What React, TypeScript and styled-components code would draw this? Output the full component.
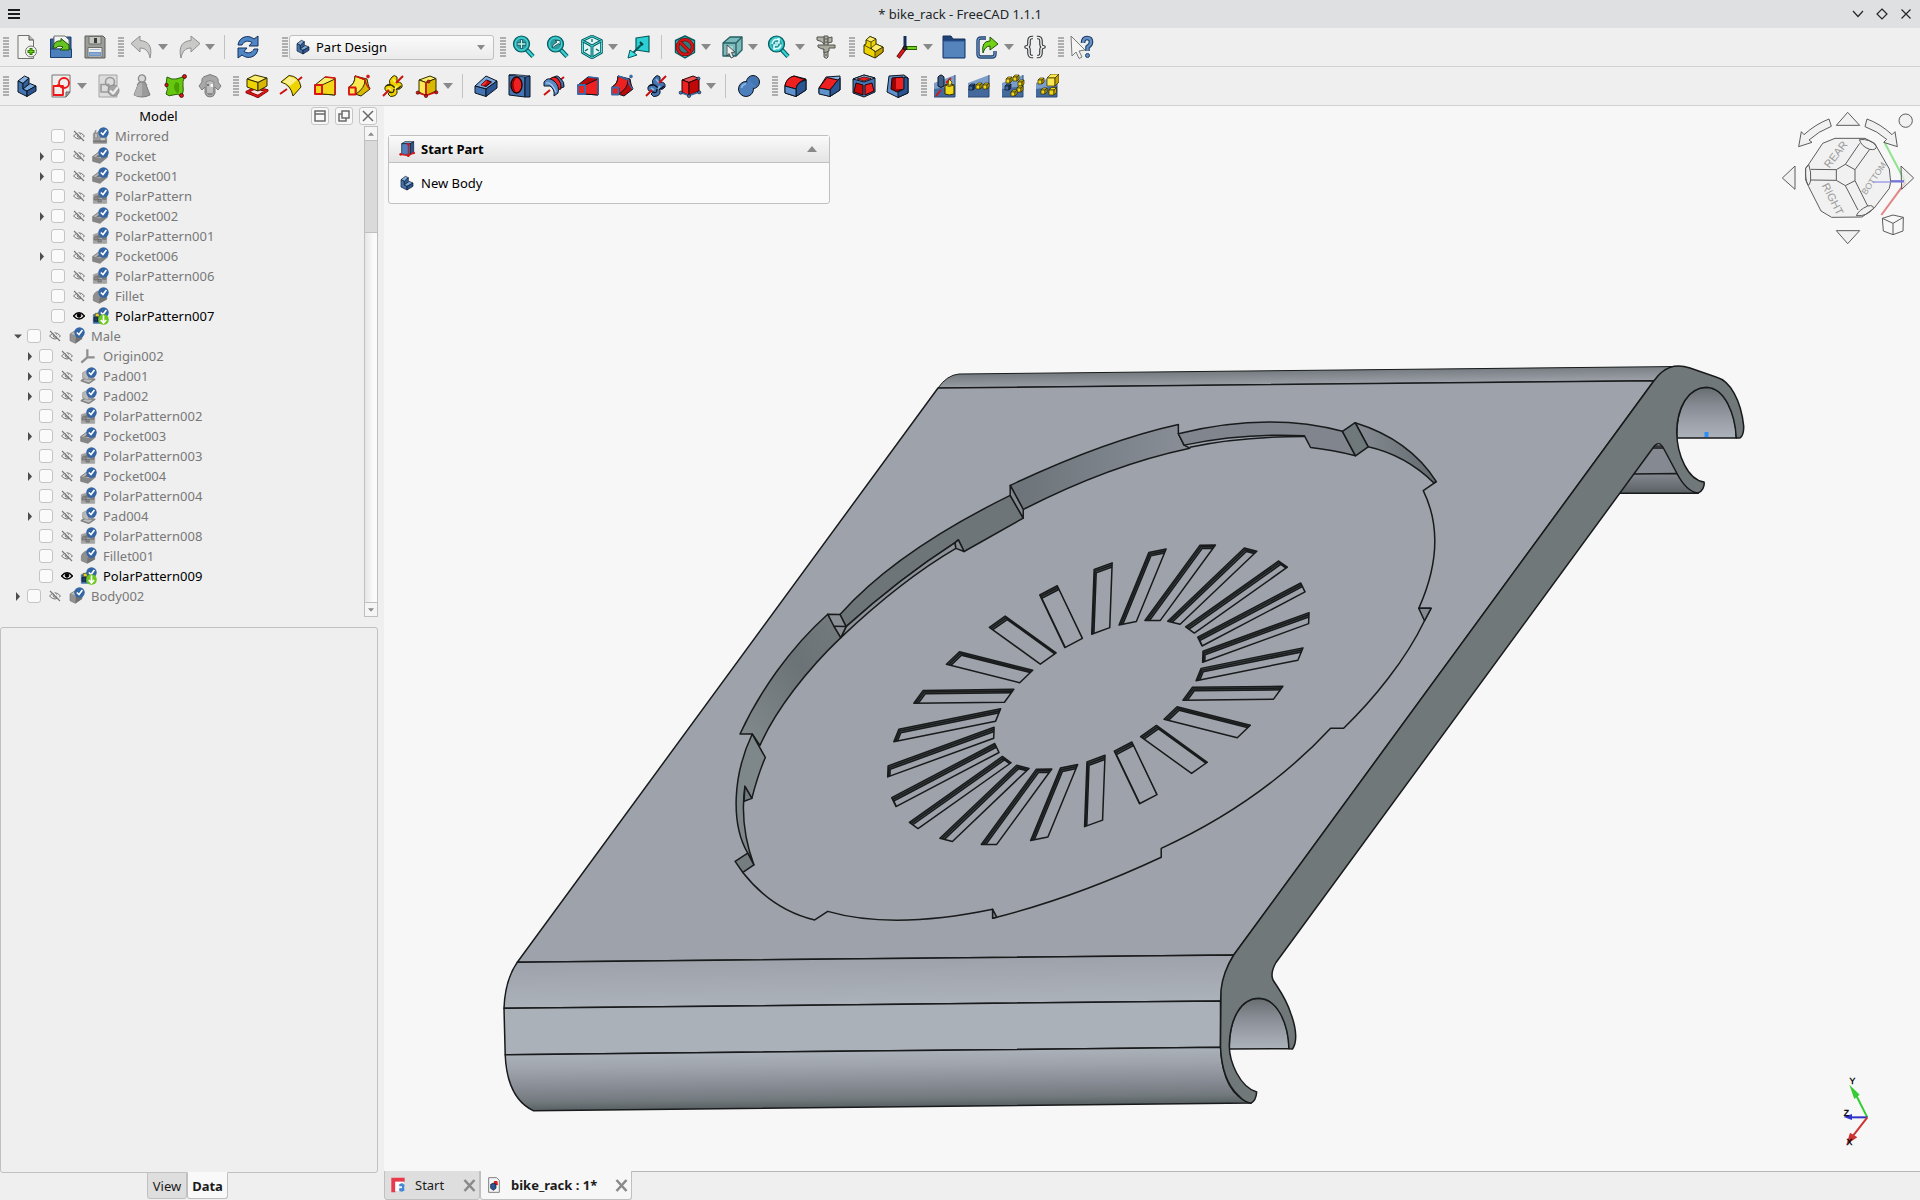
import React, { useState } from 'react';
import styled, { createGlobalStyle } from 'styled-components';

const Global = createGlobalStyle`
  * { box-sizing: border-box; }
  body { margin: 0; background: #efefef; color: #1b1b1b; font: 13px/20px "Noto Sans", "Open Sans", sans-serif; }
  button, input, select { font: inherit; color: inherit; }
  svg { display: block; }
`;

/* ---------- icon drawing ---------- */

type Shape = [d: string, fill?: string, stroke?: string, width?: number];

const NAVY = '#0b1521';
const OLIVE = '#302b00';
const TEAL = '#06595c';
const DARKRED = '#280000';
const circ = (x: number, y: number, r: number) =>
  `M${x - r} ${y}a${r} ${r} 0 1 0 ${2 * r} 0a${r} ${r} 0 1 0 ${-2 * r} 0Z`;

const cube = (top: string, left: string, right: string, line: string): Shape[] => [
  ['M4 6L15 2 21 4.500 11 8.500Z', top, line],
  ['M4 6L11 8.500V21.500L4 18Z', left, line],
  ['M11 8.500L21 4.500V17L11 21.500Z', right, line],
];
const smallCube = (x: number, y: number, a: string, b: string, line: string, s = 4): Shape[] => [
  [`M${x} ${y}l${s / 2}-${s / 2}h${s}l-${s / 2} ${s / 2}z`, a, line, 0.7],
  [`M${x} ${y}h${s}v${s}h-${s}z`, a, line, 0.7],
  [`M${x + s} ${y}l${s / 2}-${s / 2}v${s}l-${s / 2} ${s / 2}z`, b, line, 0.7],
];
const patternBase: Shape[] = [
  ['M1 9L22 1V23H1Z', '#7a9dc9', 'none'],
  ['M1 15L22 12V23H1Z', '#44699c', 'none'],
  ['M1 23H22M22 1V23', 'none', '#2a4a78', 1],
];
const magnifier: Shape[] = [
  ['M14 14L21 21.500', 'none', TEAL, 4.5],
  ['M14 14L21 21.500', 'none', '#34d4d6', 2.5],
  [circ(9.5, 9, 8), '#22b8bc', TEAL, 1.2],
  [circ(9.5, 9, 6), '#2c9a9e', '#5fe6e6', 0.8],
];
const hexOutline = 'M12 1L21.500 5.500V17.500L12 23L2.500 17.500V5.500Z';
const loft = (a: string, b: string, frame: string, line: string): Shape[] => [
  ['M2 11L12 3 22 4 22 21 9 20 2 19Z', b, line],
  ['M9 11L22 5V21L9 20Z', a, line],
  ['M2 11H9V20H2Z', a, frame, 2],
  ['M12 3L22 4V21', 'none', frame, 1.4],
];
const pipe = (a: string, b: string, frame: string, line: string): Shape[] => [
  ['M8 2L20 5 Q21 12 23 15L14 22 8 20 2 20V13Q8 10 8 2Z', b, line],
  ['M8 2L18 6Q18 14 9 20V14L2 13Q8 10 8 2Z', a, line],
  ['M2 13.500H8.500V20.500H2Z', a, frame, 1.8],
  ['M8 2L18 5.500Q19 12 23 15', 'none', frame, 1.4],
  [circ(21, 2.5, 1.4), frame, frame],
];
const helix = (a: string, b: string, line: string): Shape[] => [
  ['M11 3Q13 0 16 3V8Q22 8 21 13Q18 17 15 14Q18 20 13 22Q9 24 7 20L9 18Q3 18 4 13Q5 10 9 11Q7 6 11 3Z', a, line],
  ['M5 12Q10 9 13 13T20 12M9 18Q13 20 13 15', 'none', line, 1.4],
  ['M12 5L15 9M16 12L14 15M7 14L10 16', 'none', b, 2],
  ['M2 22L8 16M15 9L22 2', 'none', '#cc1111', 2],
];

const ICONS: Record<string, Shape[]> = {
  newDoc: [
    ['M3 .5H14L18.500 5V23.500H3Z', '#f3f4f1', '#71736e'],
    ['M14 .5V5H18.500', '#babdb6', '#555753'],
    [circ(16, 16.5, 5.5), '#f3f4f1', '#71736e'],
    ['M16 13V20M12.500 16.500H19.500', 'none', '#2e7a05', 3],
    ['M16 14V19M13.500 16.500H18.500', 'none', '#73d216', 1],
  ],
  open: [
    ['M1.500 4H5V2H22V22H1.500Z', '#2f5f9e', '#1d3f70'],
    ['M5 1H16L20 5V14H5Z', '#f3f4f1', '#71736e'],
    ['M1.500 14H22.500V22.500H1.500Z', '#4c80bd', '#1d3f70'],
    ['M4 13Q5 5 12 6V3.500L20 10L20 15H11L14 12Q9 10 7 13Z', '#66c321', '#1f5205'],
  ],
  save: [
    ['M2 1H20L22 3V23H2Z', '#9b9d99', '#5c5e5a'],
    ['M6 1.500H18V9H6Z', '#c5c7c3', '#6c6e6a'],
    ['M11 3H14V8H11Z', '#3a3c39', 'none'],
    ['M5 12.500H19V22H5Z', '#eeeeec', '#6c6e6a'],
    ['M6 17H18V21H6Z', '#6f96c8', 'none'],
    ['M7 14.500H17M7 19H17', 'none', '#a8bad2', 1],
  ],
  undo: [['M1 8.500L10 1V5.500C18 6 23 11 20 23C19 17 16 13 10 13V17Z', '#c9cac8', '#8f918e']],
  redo: [['M23 8.500L14 1V5.500C6 6 1 11 4 23C5 17 8 13 14 13V17Z', '#c9cac8', '#8f918e']],
  refresh: [
    ['M2 10C3 2 12 -1 18 4L22 1V11H13L16 7.500C12 5 8 6 6 10Z', '#4f86c6', '#15305a'],
    ['M22 14C21 22 12 25 6 20L2 23V13H11L8 16.500C12 19 16 18 18 14Z', '#4f86c6', '#15305a'],
  ],
  body: [
    ['M3 7L9.500 2 14 4 8 9.500Z', '#86b2e3', NAVY],
    ['M3 7L8 9.500V15L12 17V22.500L3 18Z', '#4475b3', NAVY],
    ['M8 9.500L14 4V10L8 15Z', '#33609a', NAVY],
    ['M8 15L15 9.500 21 12 12 17Z', '#7aa8dc', NAVY],
    ['M12 17L21 12V17L12 22.500Z', '#2b5590', NAVY],
  ],
  fitAll: [...magnifier, ['M9.500 4.500V13.500M5 9H14', 'none', '#0b4d50', 3], ['M9.500 5V13M5.500 9H13.500', 'none', '#c5f5f5', 1.4]],
  fitSel: [...magnifier, ['M6 13L7 10 11 7 9 5.500H14V10L12.500 8.500Z', '#eeffff', '#0b4d50', 0.8]],
  isometric: [
    [hexOutline, '#dff5f5', TEAL, 2.6],
    [hexOutline, 'none', '#4fe0e0', 1],
    ['M3 6L12 11V22M12 11L21 6', 'none', TEAL, 2.8],
    ['M3 6L12 11V22M12 11L21 6', 'none', '#4fe0e0', 1],
    ['M12 7V4M8 14L5 16M16 14L19 16', 'none', TEAL, 1.2],
  ],
  alignView: [
    ['M9 3L22 1V17L9 15Z', '#2ccfd2', TEAL, 1.2],
    ['M15 9L4 20', 'none', TEAL, 2],
    ['M1 23L3 15 10 20Z', '#3fe0e2', TEAL],
    ['M13 7L16 10', 'none', '#063d40', 2],
  ],
  drawStyle: [
    [hexOutline, '#2cc9cc', TEAL, 1.4],
    [circ(12, 12, 7.5), '#2a7d80', '#7c0a0a', 3.6],
    [circ(12, 12, 7.5), 'none', '#d81414', 2.2],
    ['M7 7L17 17', 'none', '#7c0a0a', 3.4],
    ['M7 7L17 17', 'none', '#d81414', 2.2],
  ],
  selBox: [
    ['M3 8L10 2H22V15L16 21H3Z', '#7cb9bb', '#245e62', 1.3],
    ['M3 8H16V21M16 8L22 2', 'none', '#245e62', 1.3],
    ['M6 11H13V18H6Z', '#a2cfd1', 'none'],
    ['M7 10L15 17 11.500 17.500 13.500 22 11 23 9 18.500 7 21Z', '#eeeeec', '#2e3436', 0.8],
  ],
  zoomSync: [...magnifier, ['M5 9Q6 4 10 4.500L12 3.500V8H8M14 9.500Q13 14 9 13.500L7 14.500V10H11', 'none', '#d8ffff', 1.6]],
  caliper: [
    ['M10 1H14V22L12.500 23.500 10 22Z', '#b2b3ab', '#53544c'],
    ['M3 2H10V9Q8 6 3 5Z M14 3L18 2V7L14 8Z', '#b2b3ab', '#53544c'],
    ['M4 10H21V13H15V16L10 18V14H8L4 12Z', '#aaab9f', '#53544c'],
    ['M11 4H13M11 7H13M11 20H13', 'none', '#53544c', 1],
  ],
  part: [
    ['M5 5L9 1.500 15 4V9L22 12V17L14 23 3 18V10L5 9Z', '#edd400', OLIVE],
    ['M5 5L9 1.500 15 4 10 7Z M10 13L15 9 22 12 14 17Z', '#fcee6a', OLIVE, 0.8],
    ['M14 17L22 12V17L14 23Z', '#c4a000', OLIVE, 0.8],
    ['M3 10L14 16M10 7V14', 'none', OLIVE, 0.8],
  ],
  axes: [
    ['M10 13V1', 'none', '#15305a', 3],
    ['M10 13L22 13', 'none', '#1f5205', 4],
    ['M10 13L21.500 13', 'none', '#73d216', 2.2],
    ['M10 13L3 22.500', 'none', '#5a0505', 4],
    ['M10 13L3.500 22', 'none', '#dd1c1c', 2.4],
    [circ(10, 13, 2), '#2d2d2d', '#111'],
  ],
  group: [
    ['M1 1H9L11 4H23V23H1Z', '#1f4377', '#15305a'],
    ['M1.500 6H22.500V22.500H1.500Z', '#5484bb', '#2b5590'],
  ],
  link: [
    ['M10 3H5Q2 3 2 6V19Q2 22 5 22H16Q19 22 19 19V16', 'none', '#203e68', 3.4],
    ['M10 3H5Q2 3 2 6V19Q2 22 5 22H16Q19 22 19 19V16', 'none', '#6d9bd0', 1.2],
    ['M7 18Q5 6 14 6V2L22 9 14 15V11Q9 11 7 18Z', '#73d216', '#1f5205'],
  ],
  varset: [
    ['M10 2.500Q6 2 6 6V9Q6 12 3 12Q6 12 6 15V18Q6 22 10 21.500M14 2.500Q18 2 18 6V9Q18 12 21 12Q18 12 18 15V18Q18 22 14 21.500', 'none', '#2e3436', 3.6],
    ['M10 2.500Q6 2 6 6V9Q6 12 3 12Q6 12 6 15V18Q6 22 10 21.500M14 2.500Q18 2 18 6V9Q18 12 21 12Q18 12 18 15V18Q18 22 14 21.500', 'none', '#f2f2f0', 1.4],
  ],
  whatsThis: [
    ['M13 8Q13 3 17 3T21 7Q21 10 17.500 12V16', 'none', '#203e68', 4.6],
    ['M13 8Q13 3 17 3T21 7Q21 10 17.500 12V16', 'none', '#6490c6', 2.4],
    [circ(17.5, 20.5, 2), '#6490c6', '#203e68'],
    ['M1 1L15 15 9 16 12 22 9 23.500 6 17 2 21Z', '#f4f4f2', '#77797a'],
  ],
  sketch: [
    ['M3 1H21V18L17 23H3Z', '#eeeeec', '#777'],
    ['M17 23V18H21Z', '#aaaca8', '#666'],
    [circ(15, 9, 5), 'none', '#ee1616', 1.8],
    ['M4.500 12H14V21H4.500Z', 'none', '#ee1616', 1.8],
    ['M9 12V10', 'none', '#ee1616', 1.4],
  ],
  sketchCheck: [
    ['M3 1H21V23H3Z', '#dcdcdc', '#a4a4a4'],
    [circ(14, 8, 4.5), 'none', '#999', 1.6],
    ['M5 10.500H13V18H5Z', 'none', '#999', 1.6],
    [circ(17.5, 16.5, 5.5), '#a5a5a5', '#8a8a8a'],
    ['M14 16.500L17 19.500 22 13', 'none', '#eee', 2.2],
  ],
  mass: [
    ['M9 8H15L20 21Q12 25 4 21Z', '#9b9b9b', '#7b7b7b'],
    ['M9 8H12V22Q7 23 4 21Z', '#b2b2b2', 'none'],
    [circ(12, 4.5, 3.6), '#d8d8d8', '#8c8c8c', 1.4],
    ['M7 11Q12 5 17 11', 'none', '#8c8c8c', 1.2],
  ],
  shape: [
    ['M3 3Q8 6 12 5T21 2Q18 8 19 12T18 22Q13 19 9 21T2 20Q5 15 2 11Z', '#66c80e', '#245e04'],
    ['M12 8Q8 13 12 18T15 9Z', '#4aa003', 'none'],
    [circ(20.5, 2.5, 2), '#e01414', DARKRED, 0.7],
    [circ(2.5, 11, 1.7), '#e01414', DARKRED, 0.7],
    [circ(17.5, 21.5, 2), '#e01414', DARKRED, 0.7],
  ],
  sheep: [
    ['M8 2Q12 -1 16 2Q21 3 20 8L23 12 20 16 17 13V19Q16 23 12 23T7 19V13L4 16 1 12 4 8Q3 3 8 2Z', '#a8a8a8', '#7c7c7c'],
    ['M8 8Q12 5 16 8L15.500 19Q12 22 8.500 19Z', '#bdbdbd', '#8b8b8b'],
    ['M12.500 10H15V13H12.500Z', '#f5f5f5', 'none'],
    ['M9 10H11V12H9Z', '#777', 'none'],
    ['M10 20H14', 'none', '#777', 1.2],
  ],
  pad: [
    ['M2 18L10 14 22 16.500 13 22.500Z', '#ffe3e3', '#6d0505', 3],
    ['M2 18L10 14 22 16.500 13 22.500Z', 'none', '#e01414', 1.6],
    ['M2 5L10 1 22 4 13 8.500Z', '#fcee6a', OLIVE],
    ['M2 5L13 8.500V17L2 13Z', '#edd400', OLIVE],
    ['M13 8.500L22 4V12L13 17Z', '#d8b800', OLIVE],
  ],
  revolve: [
    ['M1 20L8 15M17 8L23 3', 'none', '#cc1111', 2],
    ['M2 8L10 1.500Q20 2 22 13L14 22Q12 11 2 8Z', '#edd400', OLIVE],
    ['M3.500 8L10.500 2.500Q15 3 18 6L11 12Q8 9 3.500 8Z', '#fcf08a', 'none'],
  ],
  loftAdd: loft('#f0d818', '#fcee6a', '#d81414', OLIVE),
  pipeAdd: pipe('#fce94f', '#d8b800', '#d81414', OLIVE),
  helixAdd: helix('#edd400', '#fcee6a', OLIVE),
  primAdd: [
    ...cube('#fcee6a', '#fce94f', '#d8b800', OLIVE),
    ['M11 8V21.500L2.500 18.500M11 21.500L21.500 18', 'none', '#d81414', 1.6],
    [circ(2.7, 18.7, 1.6), '#e01414', DARKRED, 0.6],
    [circ(11, 22, 1.6), '#e01414', DARKRED, 0.6],
    [circ(21.3, 18.3, 1.6), '#e01414', DARKRED, 0.6],
    [circ(13.5, 7.5, 1.5), '#e01414', DARKRED, 0.6],
  ],
  pocket: [
    ['M1 12L12 2 23 7 12 15Z', '#7aa8dc', NAVY],
    ['M1 12L12 15V22.500L1 19Z', '#4475b3', NAVY],
    ['M12 15L23 7V14L12 22.500Z', '#2b5590', NAVY],
    ['M7 11L12.500 6 17.500 8 12 12.500Z', '#c40808', DARKRED],
    ['M7 11L12.500 6V9L9 12Z', '#ee3030', 'none'],
  ],
  hole: [
    ['M1 1L17 2V23L1 21Z', '#4475b3', NAVY],
    ['M17 3L22 2V23H17Z', '#2b5590', NAVY],
    ['M1 1L6 .5 22 2 17 3Z', '#86b2e3', NAVY, 0.7],
    ['M3 11a5.500 8 0 1 0 11 0a5.500 8 0 1 0 -11 0Z', '#ee2020', DARKRED, 1.4],
    ['M8 4Q3 11 8 18Q4 17 4 11T8 4Z', '#8c0000', 'none'],
  ],
  groove: [
    ['M2 21L8 16M17 7L22 3', 'none', '#cc1111', 2],
    ['M11 4Q15 0 18 4Q23 8 22 13L18 14Z', '#4475b3', NAVY],
    ['M8 5Q12 1 16 5Q20 9 19 15L14 16Z', '#ee2020', DARKRED],
    ['M2 8Q6 2 12 7Q18 12 16 19L12 22Q13 15 8 12L2 12Z', '#5b8cc6', NAVY],
    ['M4 9Q10 8 14 18', 'none', '#a5c6ea', 1.2],
  ],
  loftSub: loft('#ee2020', '#b80808', '#3b6aa6', NAVY),
  pipeSub: pipe('#ee2020', '#b80808', '#3b6aa6', NAVY),
  helixSub: helix('#4475b3', '#86b2e3', NAVY),
  primSub: [
    ...cube('#ee5050', '#ee2020', '#c00808', DARKRED),
    ['M11 21.500L2.500 18.500M11 21.500L21.500 18', 'none', '#3b6aa6', 1.6],
    [circ(2.7, 18.7, 1.6), '#4475b3', NAVY, 0.6],
    [circ(11, 22, 1.6), '#4475b3', NAVY, 0.6],
    [circ(21.3, 18.3, 1.6), '#4475b3', NAVY, 0.6],
    [circ(20.5, 4.5, 1.5), '#4475b3', NAVY, 0.6],
  ],
  boolean: [
    [circ(16, 8, 6.5), '#4475b3', NAVY],
    [circ(9, 15, 7.5), '#4d7fbd', NAVY],
    ['M10 8Q12 12 16 14L19 13 11 5Z', '#4d7fbd', 'none'],
    ['M4.500 14Q5.500 10 9 10', 'none', '#86b2e3', 2],
  ],
  fillet: [
    ['M1 11Q3 4 10 2L22 5V16L12 22.500 1 19Z', '#3b6aa6', NAVY],
    ['M10 2L22 6Q13 7 12 15L1 12Q2 4 10 2Z', '#ee2020', DARKRED],
    ['M12 15Q13 8 22 6V16L12 22.500Z', '#2b5590', NAVY],
    ['M1 12L12 15V22.500L1 19Z', '#5f92cd', NAVY],
  ],
  chamfer: [
    ['M1 14L8 3 22 2V16L12 22.500 1 19Z', '#86b2e3', NAVY],
    ['M1 14L9 3.500 20 6 12 16Z', '#ee2020', DARKRED],
    ['M12 16L20 6 22 4V16L12 22.500Z', '#2b5590', NAVY],
    ['M1 14L12 16V22.500L1 20Z', '#5f92cd', NAVY],
  ],
  draft: [
    ['M1 5L12 1 23 4V18L12 23 1 19Z', '#4475b3', NAVY],
    ['M1 5L12 1 23 4 12 8Z', '#9cc1ea', NAVY],
    ['M4 9L11 11V21L2 18Z', '#c40808', DARKRED],
    ['M13 11L20 9 22 17 13 21Z', '#ee2020', DARKRED],
    ['M5 5L12 3 19 4.500 12 7Z', '#ee2020', DARKRED, 0.7],
  ],
  thickness: [
    ['M3 2L18 1 22 4V19L12 23.500 1 18Z', '#5f92cd', NAVY],
    ['M6 4L17 3V15L11 18 5 15Z', '#9a0202', DARKRED],
    ['M10 4H17V15H10Z', '#ee2020', 'none'],
    ['M18 3L22 4V19L12 23.500V18L18 15Z', '#2b5590', NAVY],
  ],
  mirror: [
    ...patternBase,
    ['M5 3Q8 -1 11 3V12Q8 15 5 12Z', '#3f5f88', NAVY],
    ['M3 22L8 16M13 9L18 4', 'none', '#d81414', 1.8],
    ['M12 11Q16 8 21 11V20Q16 22 12 20Z', '#f0d818', OLIVE],
    ['M12 11Q16 14 21 11', 'none', OLIVE, 0.8],
    ['M16 5L19 8L18 11H15Z', '#fce94f', OLIVE, 0.7],
  ],
  linear: [
    ...patternBase,
    ...smallCube(2, 12, '#3b6aa6', '#203e68', NAVY, 4),
    ...smallCube(9, 11, '#f0d818', '#c4a000', OLIVE, 4),
    ...smallCube(16, 11, '#f0d818', '#c4a000', OLIVE, 4),
  ],
  polar: [
    ...patternBase,
    ...smallCube(4, 12, '#3b6aa6', '#203e68', NAVY, 4),
    ...smallCube(5, 5, '#f0d818', '#c4a000', OLIVE, 4),
    ...smallCube(12, 3, '#f0d818', '#c4a000', OLIVE, 4),
    ...smallCube(17, 8, '#f0d818', '#c4a000', OLIVE, 4),
    ...smallCube(16, 14, '#f0d818', '#c4a000', OLIVE, 4),
    ...smallCube(10, 18, '#f0d818', '#c4a000', OLIVE, 4),
  ],
  multi: [
    ...patternBase,
    ...smallCube(3, 6, '#f0d818', '#c4a000', OLIVE, 4),
    ...smallCube(12, 4, '#fce94f', '#c4a000', OLIVE, 8),
    ...smallCube(6, 16, '#f0d818', '#c4a000', OLIVE, 4),
    ...smallCube(14, 16, '#f0d818', '#c4a000', OLIVE, 5),
  ],
  startPart: [
    ['M4 4L9 1H22L18 4Z', '#86b2e3', NAVY],
    ['M4 4H17V20H4Z', '#4f83c0', NAVY],
    ['M17 4L22 1V17L17 20Z', '#2b5590', NAVY],
    ['M14 5V22L2 20M14 22L22 18', 'none', '#d81414', 1.8],
    [circ(2.5, 20, 2), '#d81414', 'none'],
    [circ(14, 22, 2), '#d81414', 'none'],
    [circ(22, 18, 2), '#d81414', 'none'],
    [circ(14, 5, 2), '#d81414', 'none'],
  ],
  gMirror: [['M2 9L6 3V9L10 5 14 4V14L22 12V23H2Z', '#a0a0a0', '#8a8a8a'], ['M4 8H8V15H4Z M12 14H20V21H12Z', '#c9c9c9', '#777'], ['M2 20H22', 'none', '#777', 3]],
  gPocket: [['M1 13L12 5 23 9V14L12 23 1 20Z', '#858585', '#747474'], ['M1 13L12 5 23 9 12 16Z', '#b5b5b5', '#777'], ['M6 13L13 8 17 10 11 14Z', '#717171', 'none']],
  gPolar: [['M2 10L22 3V23H2Z', '#a5a5a5', '#999'], ['M3 15L5 12H9V18H3Z M10 10H14V14H10Z M16 12H21V17H16Z M9 17H14V21H9Z', '#888', '#666']],
  gFillet: [['M2 12Q4 5 12 4L22 8V17L11 23 2 19Z', '#8f8f8f', '#777'], ['M11 23V15L22 9V17Z', '#747474', 'none']],
  gBody: [['M3 9L11 4 21 8V16L11 23 3 19Z', '#929292', '#777'], ['M3 9L11 4 21 8 12 12Z', '#bdbdbd', '#888'], ['M12 12L21 8V16L11 23Z', '#707070', 'none']],
  gPad: [['M2 19L8 15 22 17 13 23Z', '#c0c0c0', '#858585', 2.4], ['M4 7L12 3 21 6V14L12 18 4 15Z', '#b9b9b9', '#8b8b8b'], ['M12 10L21 6V14L12 18Z', '#999', 'none']],
  gOrigin: [['M11 14V2M11 14H22M11 14L2 22', 'none', '#8f8f8f', 3.4]],
  tip: [['M2 10L22 3V23H2Z', '#3f6fae', '#33609a'], ['M5 8H11V13H5Z', '#e6cf20', '#5b5010'], ['M3 14H9V20H3Z', '#203e68', NAVY]],
  docPage: [['M4 1H16L20 5V23H4Z', '#f6f6f6', '#777', 1.4], ['M12 6L17 6 18 12H12Z', '#dd1c1c', 'none'], ['M7 11L11 9 15 11V17L11 20 7 17Z', '#2b5590', NAVY]],
  freecad: [['M2 1H22V7H8V23H2Z', '#e83a4a', 'none'], ['M8 7H20V11H13V14H18V17H13V21H8Z', '#fff', 'none'], ['M14 11L18 9 22 12 21 16 22 20 18 22 14 21V17H18V14H14Z', '#4287d6', 'none']],
};

function Icon({ name, size = 24 }: { name: string; size?: number }) {
  return (
    <svg width={size} height={size} viewBox="0 0 24 24" aria-hidden="true">
      {ICONS[name].map(([d, fill = 'none', stroke = 'none', width = 1], i) => (
        <path key={i} d={d} fill={fill} stroke={stroke} strokeWidth={width} strokeLinejoin="round" fillRule="evenodd" />
      ))}
    </svg>
  );
}

const Caret = ({ up = false, w = 10, h = 6 }: { up?: boolean; w?: number; h?: number }) => (
  <svg width={w} height={h} viewBox="0 0 10 6" aria-hidden="true">
    <path d={up ? 'M0 6L5 0 10 6Z' : 'M0 0H10L5 6Z'} fill="#888a8a" />
  </svg>
);

/* ---------- window frame ---------- */

const Window = styled.div`
  display: flex;
  flex-direction: column;
  height: 100vh;
  overflow: hidden;
`;
const TitleBar = styled.header`
  display: grid;
  grid-template-columns: 1fr auto 1fr;
  align-items: center;
  flex: none;
  height: 28px;
  padding: 0 7px;
  background: #dee0e2;
`;
const Title = styled.h1`
  margin: 0;
  font-size: 13px;
  font-weight: 400;
  color: #232629;
`;
const WindowControls = styled.div`
  display: flex;
  justify-content: flex-end;
  gap: 10px;
`;
const PlainButton = styled.button`
  display: flex;
  align-items: center;
  justify-content: center;
  width: 14px;
  height: 14px;
  padding: 0;
  border: 0;
  background: none;
`;

/* ---------- tool bars ---------- */

const Bar = styled.div`
  display: flex;
  align-items: center;
  flex: none;
  height: 39px;
  border-bottom: 1px solid #d2d2d2;
  background: #efefef;
`;
const Grip = styled.div<{ $w: number }>`
  flex: none;
  width: ${(p) => p.$w}px;
  height: 20px;
  padding-right: 1px;
  &::after {
    content: '';
    display: block;
    width: 6px;
    height: 20px;
    margin-left: auto;
    background: radial-gradient(circle at 1px 1px, #aeaeae 0 1px, transparent 1px) 0 0 / 2px 3px;
  }
`;
const Divider = styled.div`
  flex: none;
  width: 1px;
  height: 24px;
  margin: 0 6px 0 5px;
  background: #c2c2c2;
`;
const ToolButton = styled.button<{ $menu?: boolean }>`
  display: flex;
  align-items: center;
  gap: 4px;
  flex: none;
  width: ${(p) => (p.$menu ? 47 : 34)}px;
  height: 34px;
  padding: 0 0 0 5px;
  border: 0;
  background: none;
`;
const WorkbenchBox = styled.label`
  display: flex;
  align-items: center;
  gap: 5px;
  width: 205px;
  height: 25px;
  padding: 0 8px 0 5px;
  border: 1px solid #c0c0c0;
  border-radius: 3px;
  background: linear-gradient(#fafafa, #ebebeb);
`;
const WorkbenchSelect = styled.select`
  flex: 1;
  min-width: 0;
  padding: 0;
  appearance: none;
  border: 0;
  background: none;
  color: #000;
`;

type Tool = [icon: string, label: string, menu?: boolean] | '|' | 'grip' | 'workbench';

const BAR_ONE: Tool[] = [
  ['newDoc', 'New'], ['open', 'Open'], ['save', 'Save'], 'grip',
  ['undo', 'Undo', true], ['redo', 'Redo', true], '|', ['refresh', 'Refresh'], 'workbench', 'grip',
  ['fitAll', 'Fit all'], ['fitSel', 'Fit selection'], ['isometric', 'Isometric', true], ['alignView', 'Align to selection'], '|',
  ['drawStyle', 'Draw style', true], ['selBox', 'Bounding box', true], ['zoomSync', 'Sync view', true], ['caliper', 'Measure'], 'grip',
  ['part', 'Create part'], ['axes', 'Create datum', true], ['group', 'Create group'], ['link', 'Make link', true], ['varset', 'Variable set'], 'grip',
  ['whatsThis', "What's this?"],
];
const BAR_TWO: Tool[] = [
  ['body', 'New body'], ['sketch', 'New sketch', true], ['sketchCheck', 'Validate sketch'], ['mass', 'Check geometry'],
  ['shape', 'Sub-shape binder'], ['sheep', 'Clone'], 'grip',
  ['pad', 'Pad'], ['revolve', 'Revolve'], ['loftAdd', 'Additive loft'], ['pipeAdd', 'Additive pipe'], ['helixAdd', 'Additive helix'],
  ['primAdd', 'Additive primitive', true], '|',
  ['pocket', 'Pocket'], ['hole', 'Hole'], ['groove', 'Groove'], ['loftSub', 'Subtractive loft'], ['pipeSub', 'Subtractive pipe'],
  ['helixSub', 'Subtractive helix'], ['primSub', 'Subtractive primitive', true], '|', ['boolean', 'Boolean'], 'grip',
  ['fillet', 'Fillet'], ['chamfer', 'Chamfer'], ['draft', 'Draft'], ['thickness', 'Thickness'], 'grip',
  ['mirror', 'Mirror'], ['linear', 'Linear pattern'], ['polar', 'Polar pattern'], ['multi', 'Multi-transform'],
];

function ToolBar({ tools, label }: { tools: Tool[]; label: string }) {
  return (
    <Bar role="toolbar" aria-label={label}>
      <Grip $w={10} />
      {tools.map((t, i) => {
        if (t === '|') return <Divider key={i} />;
        if (t === 'grip') return <Grip key={i} $w={13} />;
        if (t === 'workbench')
          return (
            <React.Fragment key={i}>
              <Grip $w={24} />
              <WorkbenchBox>
                <Icon name="body" size={16} />
                <WorkbenchSelect aria-label="Workbench" defaultValue="Part Design">
                  <option>Part Design</option>
                </WorkbenchSelect>
                <Caret w={8} h={5} />
              </WorkbenchBox>
            </React.Fragment>
          );
        return (
          <ToolButton key={i} $menu={t[2]} aria-label={t[1]}>
            <Icon name={t[0]} />
            {t[2] && <Caret />}
          </ToolButton>
        );
      })}
    </Bar>
  );
}

/* ---------- model panel ---------- */

const Main = styled.main`
  display: flex;
  flex: 1;
  min-height: 0;
`;
const Side = styled.aside`
  display: flex;
  flex-direction: column;
  flex: none;
  width: 384px;
  padding-right: 6px;
`;
const SideHeader = styled.div`
  display: flex;
  align-items: center;
  flex: none;
  gap: 6px;
  height: 20px;
  padding-right: 1px;
`;
const SideTitle = styled.h2`
  flex: 1;
  margin: 0;
  padding-left: 12px;
  font-size: 13px;
  font-weight: 400;
  text-align: center;
  color: #000;
`;
const DockButton = styled.button`
  display: flex;
  align-items: center;
  justify-content: center;
  width: 18px;
  height: 18px;
  padding: 0;
  border: 1px solid #c6c6c6;
  border-radius: 3px;
  background: #f8f8f8;
`;
const TreeArea = styled.div`
  display: flex;
  flex: 492 1 0;
  min-height: 0;
`;
const Tree = styled.ul`
  flex: 1;
  margin: 0;
  padding: 0;
  overflow: hidden;
  list-style: none;
`;
const TreeRow = styled.li<{ $level: number; $shown: boolean }>`
  display: flex;
  align-items: center;
  height: 20px;
  padding-left: ${(p) => 12 + p.$level * 12}px;
  color: ${(p) => (p.$shown ? '#000' : '#787878')};
`;
const Twisty = styled.button`
  display: flex;
  align-items: center;
  justify-content: center;
  width: 12px;
  height: 12px;
  margin-right: 3px;
  padding: 0;
  border: 0;
  background: none;
`;
const TwistySpace = styled.span`
  width: 15px;
`;
const Tick = styled.input`
  appearance: none;
  width: 14px;
  height: 14px;
  margin: 0 8px 0 0;
  border: 1px solid #c4c4c4;
  border-radius: 3px;
  background: #fafafa;
`;
const RowLabel = styled.label`
  display: flex;
  align-items: center;
  gap: 7px;
`;
const ItemIcon = styled.span`
  position: relative;
  width: 16px;
  height: 16px;
`;
const Badge = styled.svg<{ $low?: boolean }>`
  position: absolute;
  top: ${(p) => (p.$low ? 6 : -1)}px;
  right: -1px;
`;
const Scroll = styled.div`
  display: flex;
  flex-direction: column;
  flex: none;
  width: 14px;
  border: 1px solid #bfbfbf;
  background: linear-gradient(90deg, #e6e6e6, #fbfbfb 70%);
`;
const ScrollStep = styled.button`
  display: flex;
  align-items: center;
  justify-content: center;
  height: 13px;
  padding: 0;
  border: 0;
  background: #f5f5f5;
`;
const ScrollTrack = styled.div`
  flex: 1;
  border-top: 1px solid #bfbfbf;
  border-bottom: 1px solid #bfbfbf;
`;
const ScrollThumb = styled.div`
  height: 20%;
  border-bottom: 1px solid #bfbfbf;
  background: #dadada;
`;
const PropertyBox = styled.section`
  flex: 545 1 0;
  margin-top: 10px;
  border: 1px solid #c0c0c0;
  border-radius: 3px;
`;
const PropertyTabs = styled.div`
  display: flex;
  flex: none;
  height: 27px;
  padding-left: 147px;
`;
const PropertyTab = styled.button<{ $on: boolean }>`
  width: ${(p) => (p.$on ? 41 : 40)}px;
  height: 27px;
  margin-top: -1px;
  padding: 0;
  border: 1px solid #c0c0c0;
  border-top-color: ${(p) => (p.$on ? '#f9f9f9' : '#c0c0c0')};
  border-radius: 0 0 3px 3px;
  background: ${(p) => (p.$on ? '#f9f9f9' : '#dedede')};
  font-weight: ${(p) => (p.$on ? 700 : 400)};
`;

type Node = [name: string, icon: string, level: number, twisty?: 'closed' | 'open'];
const NODES: Node[] = [
  ['Mirrored', 'gMirror', 2], ['Pocket', 'gPocket', 2, 'closed'], ['Pocket001', 'gPocket', 2, 'closed'],
  ['PolarPattern', 'gPolar', 2], ['Pocket002', 'gPocket', 2, 'closed'], ['PolarPattern001', 'gPolar', 2],
  ['Pocket006', 'gPocket', 2, 'closed'], ['PolarPattern006', 'gPolar', 2], ['Fillet', 'gFillet', 2],
  ['PolarPattern007', 'tip', 2], ['Male', 'gBody', 0, 'open'], ['Origin002', 'gOrigin', 1, 'closed'],
  ['Pad001', 'gPad', 1, 'closed'], ['Pad002', 'gPad', 1, 'closed'], ['PolarPattern002', 'gPolar', 1],
  ['Pocket003', 'gPocket', 1, 'closed'], ['PolarPattern003', 'gPolar', 1], ['Pocket004', 'gPocket', 1, 'closed'],
  ['PolarPattern004', 'gPolar', 1], ['Pad004', 'gPad', 1, 'closed'], ['PolarPattern008', 'gPolar', 1],
  ['Fillet001', 'gFillet', 1], ['PolarPattern009', 'tip', 1], ['Body002', 'gBody', 0, 'closed'],
];

const Eye = ({ open }: { open: boolean }) => (
  <svg width="12" height="12" viewBox="0 0 12 12" fill="none" stroke={open ? '#000' : '#777'} aria-hidden="true">
    <path d="M.5 6Q6 -.5 11.500 6Q6 12 .5 6Z" strokeWidth={open ? 1.3 : 1} />
    <circle cx="6" cy="5.500" r="1.800" fill={open ? '#000' : 'none'} />
    {!open && <path d="M2.500 .5L12 10" stroke="#efefef" strokeWidth="1.200" />}
    {!open && <path d="M1 1L11 11" strokeWidth="1.100" />}
  </svg>
);

function ModelTree() {
  return (
    <Tree>
      {NODES.map(([name, icon, level, twisty]) => {
        const shown = icon === 'tip';
        return (
          <TreeRow key={name} $level={level} $shown={shown}>
            {twisty ? (
              <Twisty aria-label={`Toggle ${name}`}>
                <svg width="8" height="9" viewBox="0 0 8 9">
                  <path d={twisty === 'open' ? 'M0 2.500H8L4 6.500Z' : 'M2 0L6 4.500 2 9Z'} fill="#4d4d4d" />
                </svg>
              </Twisty>
            ) : (
              <TwistySpace />
            )}
            <Tick type="checkbox" id={`item-${name}`} />
            <RowLabel htmlFor={`item-${name}`}>
              <Eye open={shown} />
              <ItemIcon>
                <Icon name={icon} size={16} />
                {icon !== 'gOrigin' && (
                  <Badge width="11" height="11" viewBox="0 0 11 11">
                    <circle cx="5.500" cy="5.500" r="5.200" fill="#3465a4" />
                    <path d="M2.800 5.500L5 7.600 8.400 3" fill="none" stroke="#fff" strokeWidth="1.600" />
                  </Badge>
                )}
                {shown && (
                  <Badge $low width="11" height="11" viewBox="0 0 11 11">
                    <circle cx="5.500" cy="5.500" r="5.300" fill="#6cc81a" />
                    <path d="M5.500 1.500V8M2.800 6L5.500 9 8.200 6" fill="none" stroke="#fff" strokeWidth="1.700" />
                  </Badge>
                )}
              </ItemIcon>
              {name}
            </RowLabel>
          </TreeRow>
        );
      })}
    </Tree>
  );
}

/* ---------- 3D view ---------- */

const View = styled.section`
  display: flex;
  flex-direction: column;
  flex: 1;
  min-width: 0;
`;
const Canvas = styled.div`
  position: relative;
  flex: 1;
  min-height: 0;
  background: #f7f7f7;
`;
const Scene = styled.svg`
  width: 100%;
  height: 100%;
`;
const NavCube = styled.svg`
  position: absolute;
  top: 0;
  right: 0;
`;
const AxisCross = styled.svg`
  position: absolute;
  right: 40px;
  bottom: 21px;
`;
const TaskPanel = styled.section`
  position: absolute;
  top: 29px;
  left: 4px;
  width: 442px;
  border: 1px solid #c0c0c0;
  border-radius: 3px;
  background: #fafafa;
  color: #000;
`;
const TaskHeader = styled.button`
  display: flex;
  align-items: center;
  gap: 6px;
  width: 100%;
  height: 27px;
  padding: 0 12px 0 10px;
  border: 0;
  border-bottom: 1px solid #c0c0c0;
  background: linear-gradient(#fafafa, #e4e4e4);
  font-weight: 700;
  font-size: 13px;
  text-align: left;
  span { flex: 1; }
`;
const TaskAction = styled.button`
  display: flex;
  align-items: center;
  gap: 6px;
  height: 40px;
  padding: 0 10px;
  border: 0;
  background: none;
`;
const DocTabs = styled.div`
  display: flex;
  flex: none;
  height: 29px;
  border-top: 1px solid #b8b8b8;
`;
const DocTab = styled.div<{ $on?: boolean }>`
  display: flex;
  align-items: center;
  width: ${(p) => (p.$on ? 152 : 96)}px;
  height: 30px;
  margin-top: -2px;
  padding: 0 3px 0 5px;
  border: 1px solid #c0c0c0;
  border-top-color: ${(p) => (p.$on ? '#f7f7f7' : '#c0c0c0')};
  border-radius: 0 0 3px 3px;
  background: ${(p) => (p.$on ? '#f7f7f7' : '#dedede')};
`;
const DocName = styled.button<{ $on?: boolean }>`
  display: flex;
  align-items: center;
  gap: 9px;
  flex: 1;
  padding: 0;
  border: 0;
  background: none;
  font-weight: ${(p) => (p.$on ? 700 : 400)};
`;

const RADIAL = [222, -3];
const ACROSS = [-135, 219];
const slotPoints = (k: number) => {
  const a = (k * Math.PI) / 12;
  const [c, s] = [Math.cos(a), Math.sin(a)];
  return [[0.985, -0.085], [1.985, -0.085], [1.985, 0.085], [0.985, 0.085]]
    .map(([r, w]) => {
      const u = r * c - w * s;
      const v = r * s + w * c;
      return `${(976 + u * RADIAL[0] + v * ACROSS[0]).toFixed(1)},${(856 + u * RADIAL[1] + v * ACROSS[1]).toFixed(1)}`;
    })
    .join(' ');
};

const SIDE_FACE =
  'M1233.700 955Q1223 972 1221 990L1220.500 1047Q1222 1080 1238 1095Q1244 1102 1250.700 1103.300Q1256 1101 1256.700 1092' +
  'C1240 1087 1229 1062 1229.300 1045C1230 1018 1241 998.300 1259 998.300C1277 999 1288 1022 1289 1048.700L1292.500 1049' +
  'C1297 1043 1297 1030 1291 1014C1286 998 1280 991 1273 980Q1270 973 1276 962.500L1652.700 448.300Q1656 443 1660 444Q1663 446 1665 451' +
  'L1677 473.500C1683 485 1690 492 1698 493C1702 492 1705 486 1704 482C1688 480 1677 455 1676.700 432C1677 407 1688 388 1706.500 387.300' +
  'C1725 388 1735 414 1736.300 438H1740Q1744 435 1743.700 426C1741 400 1730 381 1716.700 377.300L1690 368C1675 363 1664 367 1654 380.700Z';

function Model() {
  const stops = (list: [string, number][]) => list.map(([c, o], i) => <stop key={i} offset={o} stopColor={c} />);
  return (
    <Scene viewBox="384 106 1536 1065" role="img" aria-label="3D view of bike rack part">
      <defs>
        <linearGradient id="crest" gradientUnits="userSpaceOnUse" x1="1300" y1="370" x2="1300.200" y2="385">
          {stops([['#747b7f', 0], ['#9da1a9', 1]])}
        </linearGradient>
        <linearGradient id="front1" gradientUnits="userSpaceOnUse" x1="870" y1="959" x2="870.500" y2="1005">
          {stops([['#9ea2aa', 0], ['#a4a9b1', 0.4], ['#acb2ba', 1]])}
        </linearGradient>
        <linearGradient id="front3" gradientUnits="userSpaceOnUse" x1="870" y1="1051" x2="870.600" y2="1107">
          {stops([['#abb1b9', 0], ['#a0a5ad', 0.25], ['#878b94', 0.6], ['#72797d', 0.85], ['#596063', 1]])}
        </linearGradient>
        <linearGradient id="bore" x1="0" y1="0" x2="0" y2="1">
          {stops([['#666d70', 0], ['#868a92', 0.35], ['#a0a5ad', 0.75], ['#adb3bb', 1]])}
        </linearGradient>
        <linearGradient id="under" x1="0" y1="0" x2="0" y2="1">
          {stops([['#858991', 0], ['#596063', 1]])}
        </linearGradient>
        <linearGradient id="wallA" x1="0" y1="1" x2="1" y2="0">
          {stops([['#838b8d', 0], ['#6b7376', 0.6], ['#737b7d', 1]])}
        </linearGradient>
        <linearGradient id="wallB" x1="0" y1="0" x2="1" y2="0">
          {stops([['#6b7379', 0], ['#8a8f97', 1]])}
        </linearGradient>
        <linearGradient id="wallC" x1="0" y1="0" x2="1" y2="0">
          {stops([['#878c94', 0], ['#636b6f', 1]])}
        </linearGradient>
        {Array.from({ length: 24 }, (_, k) => (
          <clipPath id={`slot${k}`} key={k}>
            <polygon points={slotPoints(k)} />
          </clipPath>
        ))}
      </defs>
      <g stroke="#181a1b" strokeWidth="1.500" strokeLinejoin="round">
        <path d="M1618 493.300L1653 446H1664L1680 474L1698 493Z" fill="#858991" />
        <path d="M1633 474L1677 473.500Q1687 490 1698 493.300H1618Z" fill="url(#under)" />
        <path d="M1650 448H1664" />
        <path d="M1676.700 438C1676 408 1688 387.300 1706.500 387.300C1725 388 1736 414 1736.300 438Z" fill="url(#bore)" />
        <path d="M1229.300 1049C1229 1018 1241 998.300 1259 998.300C1277 999 1289 1022 1289 1048.700Z" fill="url(#bore)" />
        <path d="M938 388L1654 380.700Q1664 366 1677 366.500L959 374Q947 375 938 388Z" fill="url(#crest)" strokeWidth="1" />
        <path d="M938 388L1654 380.700L1233.700 955L517.300 962.300Z" fill="#9ea2aa" />
        <path d="M517.300 962.300L1233.700 955Q1222 975 1220.500 1001L504 1008.300Q505 980 517.300 962.300Z" fill="url(#front1)" />
        <path d="M504 1008.300L1220.500 1001V1047.300L505.200 1054.700Z" fill="#aab1b9" />
        <path d="M505.200 1054.700L1220.500 1047.300Q1223 1095 1251 1103L533.200 1110.700Q507 1098 505.200 1054.700Z" fill="url(#front3)" />
        <path d={SIDE_FACE} fill="#70787a" />
      </g>
      <rect x="1704.500" y="432" width="4" height="5" fill="#2e8ff5" />
      <g
        transform="translate(700 400) scale(.408163 .344353)"
        fill="none"
        stroke="#181a1b"
        strokeWidth="1.500"
        strokeLinejoin="round"
      >
        <g id="ring">
          <path vectorEffect="non-scaling-stroke" d="M98 970C145 850 220 720 313 622L345 690C265 780 185 900 147 1003L128 970Z" fill="url(#wallA)" />
          <path vectorEffect="non-scaling-stroke" d="M343 623C450 480 600 370 760 277L792 343L647 440L633 406L625 414Q488 519 358 658Z" fill="#6d7578" />
          <path vectorEffect="non-scaling-stroke" d="M345 690Q495 522 627 431L625 414Q488 519 358 658Z" fill="#8d9399" />
          <path vectorEffect="non-scaling-stroke" d="M625 414L633 406L647 440L627 431Z" fill="#858c90" />
          <path vectorEffect="non-scaling-stroke" d="M313 622L343 623L358 658L345 690L328 657Z" fill="#8a9095" />
          <path vectorEffect="non-scaling-stroke" d="M328 657L358 658" />
          <path vectorEffect="non-scaling-stroke" d="M760 248C890 175 1030 108 1172 71V98L1186 131L1200 140C1060 175 920 240 792 318Z" fill="url(#wallB)" />
          <path vectorEffect="non-scaling-stroke" d="M760 248L792 318V343L760 277Z" fill="#838a8f" />
          <path vectorEffect="non-scaling-stroke" d="M1172 98C1310 58 1450 52 1574 91L1606 162Q1550 145 1496 138L1481 104C1380 98 1280 108 1186 131Z" fill="#81868e" />
          <path vectorEffect="non-scaling-stroke" d="M1200 137C1290 115 1380 106 1481 106" />
          <path vectorEffect="non-scaling-stroke" d="M1605 66C1690 97 1760 155 1804 237L1798 241C1749 184 1690 150 1637 136Z" fill="url(#wallC)" />
          <path vectorEffect="non-scaling-stroke" d="M1574 91L1605 66L1637 136L1606 162Z" fill="#6f787b" />
          <path vectorEffect="non-scaling-stroke" d="M1804 237L1772 263C1812 360 1812 470 1761 605H1791L1775 641C1729 755 1649 871 1577 953H1545C1430 1100 1290 1215 1130 1302V1328C1000 1400 870 1460 717 1505V1479C570 1515 430 1525 313 1485L281 1510C210 1490 150 1440 105 1372" />
          <path vectorEffect="non-scaling-stroke" d="M1761 605H1791L1775 641ZM717 1479L727 1502L717 1505Z" fill="#858b92" />
          <path vectorEffect="non-scaling-stroke" d="M128 970L160 1038C145 1080 135 1120 127 1157L110 1122C102 1190 104 1260 132 1350L117 1316C75 1230 80 1090 128 970Z" fill="#7e8789" />
          <path vectorEffect="non-scaling-stroke" d="M110 1122L127 1157L108 1165Z" fill="#747c7f" />
          <path vectorEffect="non-scaling-stroke" d="M86 1340L117 1316L132 1350L105 1372Z" fill="#757d80" />
        </g>
        {Array.from({ length: 24 }, (_, k) => {
          const pts = slotPoints(k);
          return (
            <g key={k}>
              <g clipPath={`url(#slot${k})`}>
                <polygon points={pts} fill="#4b5153" stroke="none" />
                <polygon points={pts} transform="translate(2 5)" vectorEffect="non-scaling-stroke" />
                <polygon points={pts} transform="translate(5 10)" fill="#9ea2aa" vectorEffect="non-scaling-stroke" />
              </g>
              <polygon points={pts} vectorEffect="non-scaling-stroke" />
            </g>
          );
        })}
      </g>
    </Scene>
  );
}

function Navigation() {
  return (
    <NavCube width="180" height="154" viewBox="0 18 540 462" aria-label="Navigation cube">
      <g fill="none" stroke="#5c5c5c" strokeWidth="3" strokeLinejoin="round">
        <path d="M434 128L496 245" stroke="#8fe48f" strokeWidth="6" />
        <path d="M496 247L424 345" stroke="#e08484" strokeWidth="6" />
        <g fill="#eeeeee" fillOpacity=".7">
          <path d="M289 76L323 37L359 76ZM289 392H359L323 431ZM165 198V268L127 234ZM483 198L521 234L485 268Z" />
          <path d="M267 57L274 79Q235 94 207 120L216 127L176 140L184 95L192 104Q226 73 267 57Z" />
          <path d="M381 57L375 80Q412 93 440 118L431 127L472 140L465 95L456 104Q422 72 381 57Z" />
          <circle cx="497" cy="62" r="20" />
          <path d="M248 130L285 115H375L404 130L448 207L452 246L448 265L402 325L366 351L275 352L243 333L206 260L197 240V205L206 193Z" />
        </g>
        <path d="M398 246H452" stroke="#a9a9ea" strokeWidth="5" />
        <path d="M452 244H492" stroke="#7474d4" strokeWidth="7" />
        <path d="M212 208L289 209L316 193L345 209V242L316 257L289 241L212 240M289 209V241M316 193L359 130M345 209L389 148M316 257L354 330M345 242L383 318" />
        <path d="M206 193Q214 215 212 240Q208 258 204 255Q194 235 197 205ZM358 119Q365 140 389 148Q410 152 409 138Q390 115 358 119ZM349 347Q356 330 383 318Q402 314 400 326Q380 350 349 347Z" />
        <path d="M427 355L459 345L490 352L459 370ZM427 355L430 393L459 404L489 393L490 352M459 370V404" />
      </g>
      <g fill="#9a9a9a" fontFamily="Liberation Sans, sans-serif" fontSize="33" textAnchor="middle">
        <text transform="translate(296 170) rotate(-52)">REAR</text>
        <text transform="translate(268 302) rotate(63)">RIGHT</text>
        <text transform="translate(409 240) rotate(-56)" fontSize="26">BOTTOM</text>
      </g>
    </NavCube>
  );
}

function Axes() {
  return (
    <AxisCross width="40" height="80" viewBox="120 60 120 240" aria-label="Axis cross">
      <g strokeWidth="6">
        <path d="M202 202L168 135" stroke="#33cc33" />
        <path d="M148 104L179 134L163 147Z" fill="#33cc33" />
        <path d="M202 202H150" stroke="#3333cc" />
        <path d="M131 201L156 192V210Z" fill="#3333cc" />
        <path d="M202 202L160 256" stroke="#cc3333" />
        <path d="M139 284L150 248L172 262Z" fill="#cc3333" />
      </g>
      <g fontFamily="Liberation Sans, sans-serif" fontSize="26" fill="#000" stroke="#000" textAnchor="middle">
        <text x="157" y="101">Y</text>
        <text x="139" y="197">Z</text>
        <text x="148" y="284">X</text>
      </g>
    </AxisCross>
  );
}

const Cross = () => (
  <svg width="13" height="13" viewBox="0 0 13 13" aria-hidden="true">
    <path d="M1.500 1L11.500 12M11.500 1L1.500 12" stroke="#8a8a8a" strokeWidth="2.600" />
  </svg>
);

export default function App() {
  const [tab, setTab] = useState('Data');
  return (
    <Window>
      <Global />
      <TitleBar>
        <PlainButton aria-label="Menu">
          <svg width="12" height="12" viewBox="0 0 12 12">
            <path d="M0 2H12M0 6H12M0 10H12" stroke="#1b1b1b" strokeWidth="2" />
          </svg>
        </PlainButton>
        <Title>* bike_rack - FreeCAD 1.1.1</Title>
        <WindowControls>
          {['M2 4L7 9.500 12 4', 'M7 2L12 7 7 12 2 7Z', 'M2.500 2.500L11.500 11.500M11.500 2.500L2.500 11.500'].map((d, i) => (
            <PlainButton key={d} aria-label={['Minimize', 'Maximize', 'Close'][i]}>
              <svg width="14" height="14" viewBox="0 0 14 14">
                <path d={d} fill="none" stroke="#232629" strokeWidth="1.200" />
              </svg>
            </PlainButton>
          ))}
        </WindowControls>
      </TitleBar>
      <ToolBar tools={BAR_ONE} label="File and view" />
      <ToolBar tools={BAR_TWO} label="Part Design" />
      <Main>
        <Side>
          <SideHeader>
            <SideTitle>Model</SideTitle>
            {['M2 2H12V12H2ZM2 5H12', 'M5 2H12V9H5ZM5 5H2V12H9V9', 'M2 2L12 12M12 2L2 12'].map((d, i) => (
              <DockButton key={d} aria-label={['Collapse', 'Float', 'Close panel'][i]}>
                <svg width="14" height="14" viewBox="0 0 14 14">
                  <path d={d} fill="none" stroke="#6a6a6a" strokeWidth="1.500" />
                </svg>
              </DockButton>
            ))}
          </SideHeader>
          <TreeArea>
            <ModelTree />
            <Scroll>
              <ScrollStep aria-label="Scroll up"><Caret up w={6} h={4} /></ScrollStep>
              <ScrollTrack><ScrollThumb /></ScrollTrack>
              <ScrollStep aria-label="Scroll down"><Caret w={6} h={4} /></ScrollStep>
            </Scroll>
          </TreeArea>
          <PropertyBox aria-label="Properties" />
          <PropertyTabs>
            {['View', 'Data'].map((t) => (
              <PropertyTab key={t} $on={t === tab} onClick={() => setTab(t)}>{t}</PropertyTab>
            ))}
          </PropertyTabs>
        </Side>
        <View>
          <Canvas>
            <Model />
            <TaskPanel>
              <TaskHeader>
                <Icon name="startPart" size={16} />
                <span>Start Part</span>
                <Caret up />
              </TaskHeader>
              <TaskAction>
                <Icon name="body" size={16} />
                New Body
              </TaskAction>
            </TaskPanel>
            <Navigation />
            <Axes />
          </Canvas>
          <DocTabs>
            <DocTab>
              <DocName><Icon name="freecad" size={16} />Start</DocName>
              <PlainButton aria-label="Close Start"><Cross /></PlainButton>
            </DocTab>
            <DocTab $on>
              <DocName $on><Icon name="docPage" size={16} />bike_rack : 1*</DocName>
              <PlainButton aria-label="Close bike_rack"><Cross /></PlainButton>
            </DocTab>
          </DocTabs>
        </View>
      </Main>
    </Window>
  );
}
